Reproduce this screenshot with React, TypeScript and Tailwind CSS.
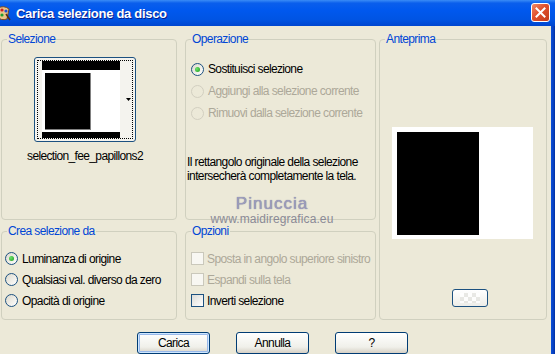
import React from "react";

const FONT = { fontFamily: '"Liberation Sans", Arial, sans-serif' };

function Group({
  label,
  className,
  children,
}: {
  label: string;
  className: string;
  children?: React.ReactNode;
}) {
  return (
    <div className={"relative border border-[#D0D0BF] rounded-[4px] " + className}>
      <span className="absolute top-[-8px] left-[5px] px-[1px] bg-[#ECE9D8] text-[#0046D5] text-[12px] leading-[14px] tracking-[-0.6px]">
        {label}
      </span>
      {children}
    </div>
  );
}

function Radio({ checked, disabled }: { checked?: boolean; disabled?: boolean }) {
  return (
    <span
      className={
        "w-[13px] h-[13px] rounded-full border flex items-center justify-center shrink-0 " +
        (disabled
          ? "border-[#D2CFC0] bg-[#ECE9D8]"
          : "border-[#1C5180] bg-[linear-gradient(135deg,#DCD9CC,#FFFFFF)]")
      }
    >
      {checked && (
        <span className="w-[5px] h-[5px] rounded-full bg-[radial-gradient(circle_at_35%_35%,#6CE36C,#1A9A1A)]" />
      )}
    </span>
  );
}

function Check({ disabled }: { disabled?: boolean }) {
  return (
    <span
      className={
        "w-[13px] h-[13px] border shrink-0 " +
        (disabled
          ? "border-[#CAC8BB] bg-[#F8F7F2]"
          : "border-[#1C5180] bg-[linear-gradient(135deg,#DCDCD7,#FFFFFF)]")
      }
    />
  );
}

function Row({
  children,
  disabled,
  gap,
}: {
  children: React.ReactNode;
  disabled?: boolean;
  gap: string;
}) {
  return (
    <div
      className={
        "h-[21px] flex items-center text-[12px] tracking-[-0.6px] " +
        gap +
        (disabled ? " text-[#ACA899]" : " text-black")
      }
    >
      {children}
    </div>
  );
}

function Button({ label, def }: { label: string; def?: boolean }) {
  return (
    <div
      className={
        "w-[73px] h-[22px] rounded-[3px] border border-[#003C74] bg-[linear-gradient(180deg,#FFFFFF,#F0F0EA_70%,#D6D0C5)] flex items-center justify-center text-[12px] tracking-[-0.6px] text-black " +
        (def ? "shadow-[inset_0_0_0_1px_#CEE7FF,inset_0_0_0_2px_#98B8EA]" : "")
      }
    >
      {label}
    </div>
  );
}

export default function App() {
  return (
    <div className="w-[555px] h-[354px] overflow-hidden bg-[#ECE9D8] relative" style={FONT}>
      {/* Title bar */}
      <div className="h-[26px] flex items-center bg-[linear-gradient(180deg,#3A8CF6_0%,#0A5EEC_12%,#0058EE_40%,#0054E3_75%,#0046CF_100%)] relative">
        <svg width="14" height="16" viewBox="0 0 14 16" className="ml-[-3px] mr-[5px] shrink-0">
          <path d="M1 3 Q7 0 12 4 L10 14 Q4 16 1 12 Z" fill="#E9C58A" stroke="#7A4A20" strokeWidth="1" />
          <circle cx="5" cy="5" r="1.6" fill="#D02020" />
          <circle cx="9" cy="6" r="1.6" fill="#2050D0" />
          <circle cx="5" cy="10" r="1.6" fill="#20A030" />
          <path d="M9 9 L13 15" stroke="#5A3010" strokeWidth="1.5" />
        </svg>
        <span className="text-white font-bold text-[13px] tracking-[-0.3px] leading-none [text-shadow:1px_1px_0_#0A1E8C]">
          Carica selezione da disco
        </span>
        <div className="absolute left-[531px] top-[3px] w-[19px] h-[19px] rounded-[3px] border border-white bg-[linear-gradient(135deg,#F08A6A,#E0502C_45%,#C43B1A)] flex items-center justify-center">
          <svg width="11" height="11" viewBox="0 0 11 11">
            <path d="M1.5 1.5 L9.5 9.5 M9.5 1.5 L1.5 9.5" stroke="white" strokeWidth="2" strokeLinecap="square" />
          </svg>
        </div>
      </div>

      {/* Body */}
      <div className="flex h-[328px]">
        <div className="w-[551px] flex flex-col">
          <div className="flex pl-[1px] pt-[13px]">
            {/* Left column */}
            <div className="flex flex-col w-[176px] gap-[11px]">
              <Group label="Selezione" className="h-[181px]">
                <div className="w-[166px] flex flex-col items-center pt-[17px]">
                  {/* Thumbnail */}
                  <div className="w-[102px] h-[85px] rounded-[3px] border border-[#1C5180] bg-[#F4F3EE] p-[2px]">
                    <div className="w-full h-full border border-dotted border-black flex">
                      <div className="w-[83px] flex flex-col pl-[4px] pt-[0px]">
                        <div className="h-[9px] bg-black w-[78px]" />
                        <div className="h-[62px] bg-white w-[78px] pt-[3px] pl-[3px]">
                          <div className="w-[46px] h-[57px] bg-black border-r border-b border-[#808080]" />
                        </div>
                        <div className="h-[6px] bg-black w-[78px]" />
                      </div>
                      <div className="flex-1 flex items-center justify-end pr-[1px]">
                        <svg width="5" height="3" viewBox="0 0 5 3">
                          <path d="M0 0 L5 0 L2.5 3 Z" fill="black" />
                        </svg>
                      </div>
                    </div>
                  </div>
                  <div className="mt-[7px] text-[12px] leading-[14px] tracking-[-0.65px] text-black">
                    selection_fee_papillons2
                  </div>
                </div>
              </Group>
              <Group label="Crea selezione da" className="h-[89px]">
                <div className="pt-[16px] pl-[3px] flex flex-col">
                  <Row gap="gap-[4px]">
                    <Radio checked />
                    <span>Luminanza di origine</span>
                  </Row>
                  <Row gap="gap-[4px]">
                    <Radio />
                    <span>Qualsiasi val. diverso da zero</span>
                  </Row>
                  <Row gap="gap-[4px]">
                    <Radio />
                    <span>Opacità di origine</span>
                  </Row>
                </div>
              </Group>
            </div>

            {/* Middle column */}
            <div className="flex flex-col w-[191px] ml-[8px] gap-[11px]">
              <Group label="Operazione" className="h-[181px]">
                <div className="pt-[18px] pl-[1px] flex flex-col">
                  <div className="pl-[4px] flex flex-col">
                    <div className="h-[22px] flex items-center gap-[4px] text-[12px] tracking-[-0.65px] text-black">
                      <Radio checked />
                      <span>Sostituisci selezione</span>
                    </div>
                    <div className="h-[22px] flex items-center gap-[4px] text-[12px] tracking-[-0.6px] text-[#ACA899]">
                      <Radio disabled />
                      <span>Aggiungi alla selezione corrente</span>
                    </div>
                    <div className="h-[22px] flex items-center gap-[4px] text-[12px] tracking-[-0.6px] text-[#ACA899]">
                      <Radio disabled />
                      <span>Rimuovi dalla selezione corrente</span>
                    </div>
                  </div>
                  <div className="mt-[31px] text-[12px] leading-[14px] tracking-[-0.6px] text-black">
                    Il rettangolo originale della selezione
                    <br />
                    intersecherà completamente la tela.
                  </div>
                </div>
              </Group>
              <Group label="Opzioni" className="h-[89px]">
                <div className="pt-[16px] pl-[5px] flex flex-col">
                  <Row gap="gap-[3px]" disabled>
                    <Check disabled />
                    <span>Sposta in angolo superiore sinistro</span>
                  </Row>
                  <Row gap="gap-[3px]" disabled>
                    <Check disabled />
                    <span>Espandi sulla tela</span>
                  </Row>
                  <Row gap="gap-[3px]">
                    <Check />
                    <span>Inverti selezione</span>
                  </Row>
                </div>
              </Group>
            </div>

            {/* Right column */}
            <Group label="Anteprima" className="w-[168px] h-[281px] ml-[3px]">
              <div className="flex flex-col">
                <div className="ml-[12px] mt-[87px] w-[141px] h-[112px] bg-white pl-[5px] pt-[5px]">
                  <div className="w-[82px] h-[103px] bg-black" />
                </div>
                <div className="ml-[72px] mt-[50px] w-[36px] h-[18px] rounded-[3px] border border-[#1C5180] bg-[linear-gradient(180deg,#FFFFFF,#EDEDE8)] flex items-center justify-center">
                  <div className="w-[20px] h-[10px] bg-[repeating-conic-gradient(#E4E4E0_0%_25%,#FFFFFF_0%_50%)] bg-[length:8px_8px] opacity-80" />
                </div>
              </div>
            </Group>
          </div>

          {/* Buttons */}
          <div className="flex pl-[137px] gap-[26px] mt-[12px]">
            <Button label="Carica" def />
            <Button label="Annulla" />
            <Button label="?" />
          </div>
        </div>
        <div className="w-[4px] bg-[linear-gradient(90deg,#0A4FD8,#0840C0_60%,#0030A0)]" />
      </div>

      {/* Watermark */}
      <div className="absolute left-[213px] top-[195px] w-[118px] flex flex-col items-center pointer-events-none">
        <span className="text-[17px] leading-[18px] tracking-[1px] text-[#9C9CBC] [text-shadow:0_0_1px_#6E6E90]">
          Pinuccia
        </span>
        <span className="text-[12px] leading-[13px] tracking-[0.1px] text-[#8A8A96]">
          www.maidiregrafica.eu
        </span>
      </div>
    </div>
  );
}
